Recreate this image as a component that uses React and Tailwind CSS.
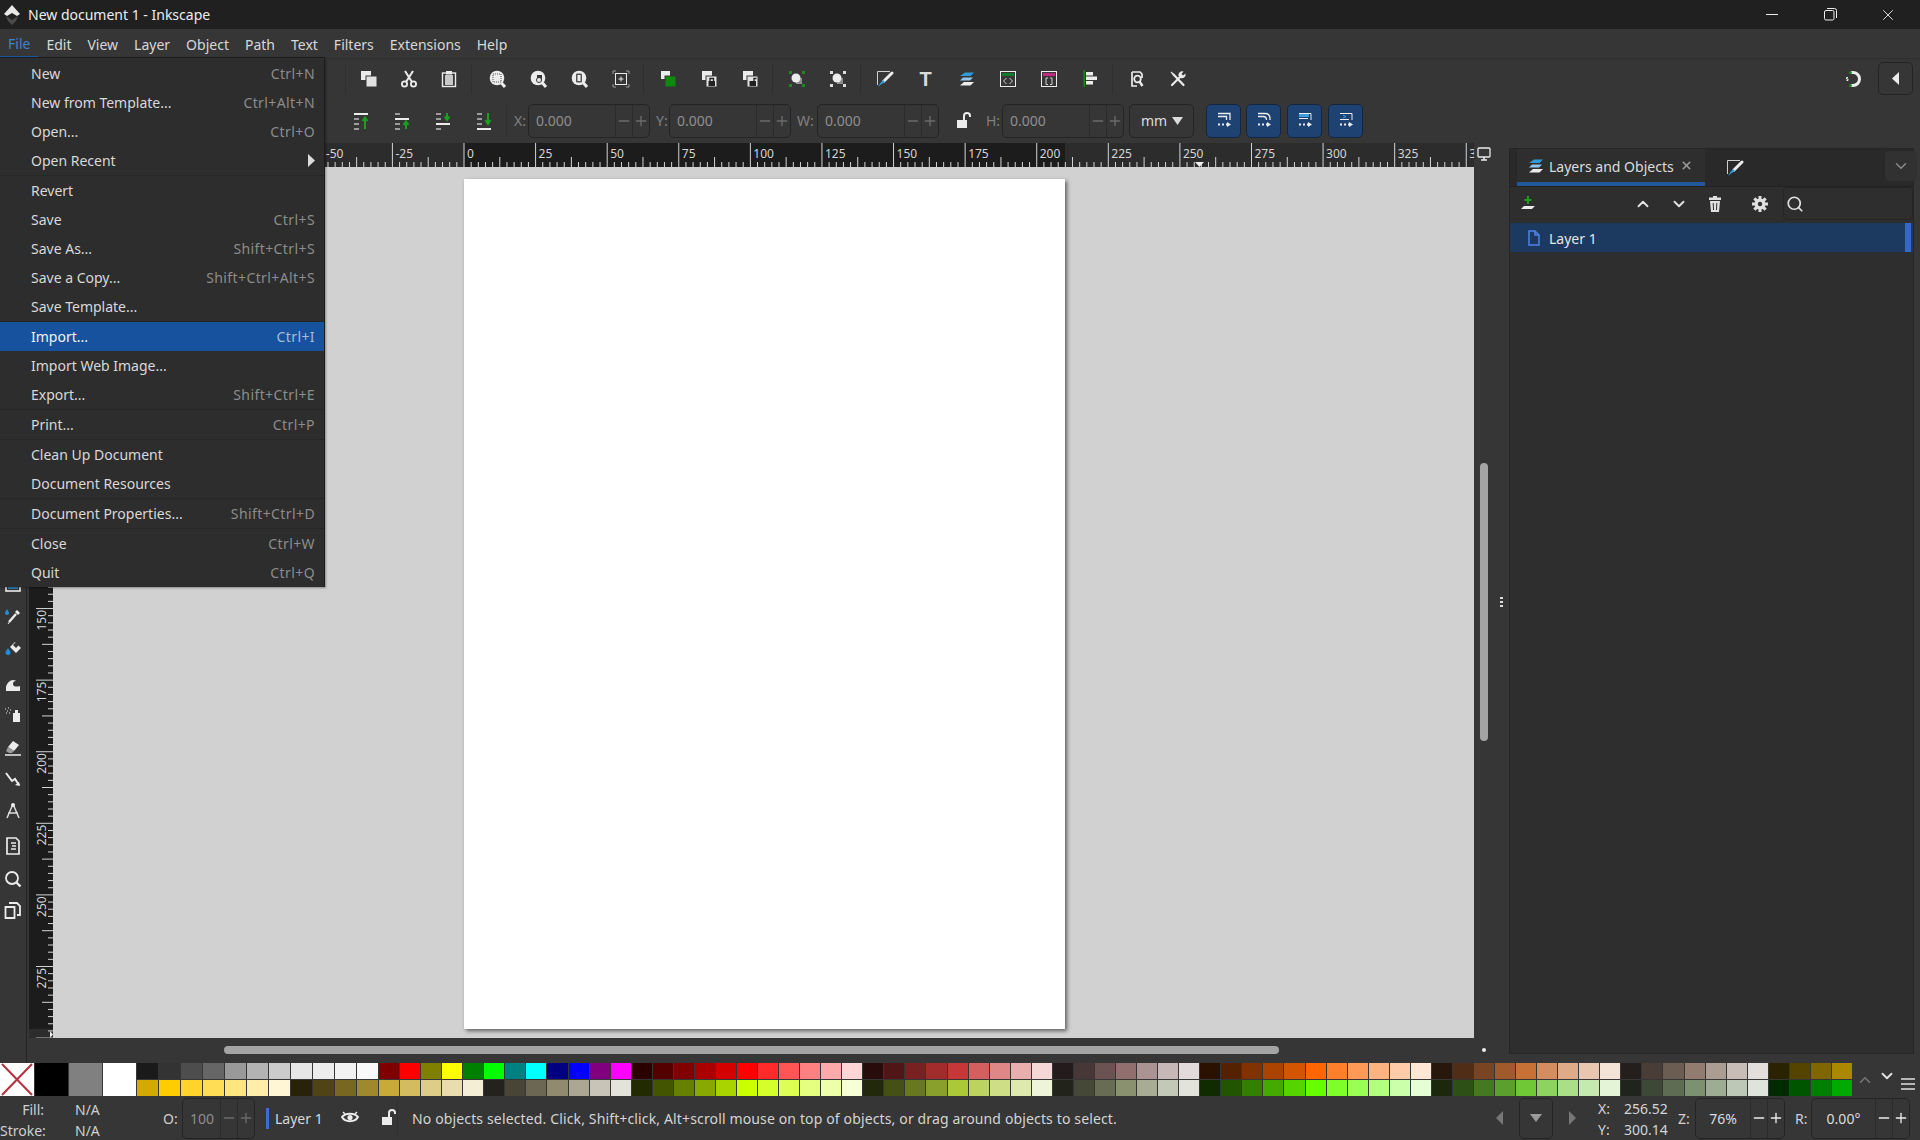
import { ChevronDown, ChevronUp, Minus, Plus, Search, X } from "lucide-react";

const menuItems = [
  ["New", "Ctrl+N"],
  ["New from Template...", "Ctrl+Alt+N"],
  ["Open...", "Ctrl+O"],
  ["Open Recent", "", "arrow", "sep"],
  ["Revert", ""],
  ["Save", "Ctrl+S"],
  ["Save As...", "Shift+Ctrl+S"],
  ["Save a Copy...", "Shift+Ctrl+Alt+S"],
  ["Save Template...", "", "", "sep"],
  ["Import...", "Ctrl+I", "active"],
  ["Import Web Image...", ""],
  ["Export...", "Shift+Ctrl+E", "", "sep"],
  ["Print...", "Ctrl+P", "", "sep"],
  ["Clean Up Document", ""],
  ["Document Resources", "", "", "sep"],
  ["Document Properties...", "Shift+Ctrl+D", "", "sep"],
  ["Close", "Ctrl+W"],
  ["Quit", "Ctrl+Q"],
];

const topColors = "#1a1a1a #333333 #4d4d4d #666666 #999999 #b3b3b3 #cccccc #e6e6e6 #ececec #f2f2f2 #f9f9f9 #800000 #ff0000 #808000 #ffff00 #008000 #00ff00 #008080 #00ffff #000080 #0000ff #800080 #ff00ff #2b0000 #550000 #800000 #aa0000 #d40000 #ff0000 #ff2a2a #ff5555 #ff8080 #ffaaaa #ffd5d5 #280b0b #501616 #782121 #a02c2c #c83737 #d35f5f #de8787 #e9afaf #f4d7d7 #241c1c #483737 #6c5353 #916f6f #ac9393 #c8b7b7 #e3dbdb #2b1100 #552200 #803300 #aa4400 #d45500 #ff6600 #ff7f2a #ff9955 #ffb380 #ffccaa #ffe6d5 #28170b #502d16 #784421 #a05a2c #c87137 #d38d5f #deaa87 #e9c6af #f4e3d7 #241f1c #483e37 #6c5d53 #917c6f #ac9d93 #c8beb7 #e3dedb #2b2200 #554400 #806600 #aa8800".split(" ");
const bottomColors = "#d4aa00 #ffcc00 #ffd42a #ffdd55 #ffe680 #ffeeaa #fff6d5 #28220b #504416 #786721 #a0892c #c8ab37 #d3bc5f #decd87 #e9ddaf #f4eed7 #24221c #484537 #6c6753 #918a6f #aca793 #c8c4b7 #e3e2db #222b00 #445500 #668000 #88aa00 #aad400 #ccff00 #d4ff2a #ddff55 #e5ff80 #eeffaa #f6ffd5 #22280b #445016 #677821 #89a02c #abc837 #bcd35f #cdde87 #dde9af #eef4d7 #22241c #454837 #676c53 #8a916f #a7ac93 #c4c8b7 #e2e3db #112b00 #225500 #338000 #44aa00 #55d400 #66ff00 #7fff2a #99ff55 #b3ff80 #ccffaa #e5ffd5 #1c280b #2d5016 #447821 #5aa02c #71c837 #8dd35f #aade87 #c6e9af #e3f4d7 #1f241c #3e4837 #5d6c53 #7c916f #9dac93 #bec8b7 #dee3db #002b00 #005500 #008000 #00aa00".split(" ");

const G = ({ s = 18, children }) => (
  <svg width={s} height={s} viewBox="0 0 18 18" fill="none">
    {children}
  </svg>
);

const W = "#ececec";
const BG = "#363636";

const Cell = ({ children, w = "w-[41px]" }) => <div className={`${w} flex shrink-0 items-center justify-center`}>{children}</div>;
const Sep = ({ cls = "mr-[2px]" }) => <div className={`ml-[2px] h-[30px] w-px shrink-0 bg-[#2f2f2f] ${cls}`} />;

const Duplicate = () => (
  <G>
    <rect x="1" y="1" width="10" height="9" fill={W} />
    <rect x="6" y="6" width="11" height="11" fill="#e2e2e2" stroke={BG} />
  </G>
);
const Cut = () => (
  <G>
    <path d="M5 1l7 11M13 1L6 12" stroke={W} strokeWidth="2" />
    <circle cx="4.5" cy="14" r="2.6" stroke={W} strokeWidth="1.8" />
    <circle cx="13.5" cy="14" r="2.6" stroke={W} strokeWidth="1.8" />
  </G>
);
const Paste = () => (
  <G>
    <rect x="2.5" y="3" width="13" height="13.5" stroke={W} strokeWidth="1.4" />
    <rect x="5" y="5" width="8" height="10" fill="#c8c8c8" />
    <rect x="6" y="1" width="6" height="3.5" fill={W} />
  </G>
);
const Mag = ({ children }) => (
  <G>
    <circle cx="8" cy="8" r="7.3" fill={W} />
    <path d="M12.5 13l3.5 4" stroke={W} strokeWidth="3" />
    {children}
  </G>
);
const ZoomCenter = () => (
  <G>
    <path d="M1 4V1h3M14 1h3v3M1 14v3h3M17 14v3h-3" stroke="#9a9a9a" />
    <rect x="3.5" y="3.5" width="11" height="11" stroke={W} />
    <path d="M9 6.5v5M6.5 9h5" stroke={W} />
  </G>
);
const Stack = ({ front = "#e2e2e2", lock, open }) => (
  <G>
    <rect x="2" y="1" width="10" height="9" fill={W} />
    <rect x="6" y="6" width="11" height="11" fill={front} stroke={BG} />
    {lock && (
      <>
        <rect x="8.5" y="11" width="6.5" height="5" fill="#222" />
        <path d={open ? "M13 11V8.5h2.5" : "M10 11V8.5h3.5V11"} stroke="#222" strokeWidth="1.3" />
      </>
    )}
  </G>
);
const Handles = ({ c }) => (
  <G>
    <rect x="1" y="1" width="3" height="3" fill={c} />
    <rect x="14" y="1" width="3" height="3" fill={c} />
    <rect x="1" y="14" width="3" height="3" fill={c} />
    <rect x="14" y="14" width="3" height="3" fill={c} />
    <rect x="8" y="8" width="6" height="6" fill="#8d8d8d" />
    <circle cx="8" cy="8" r="4.5" fill={W} />
  </G>
);
const FillStroke = () => (
  <G>
    <path d="M14 1.500H1.500V15" stroke="#d0d0d0" strokeWidth="1" />
    <path d="M16 3l-8.500 8.500" stroke={W} strokeWidth="3" strokeLinecap="round" />
    <path d="M7 10l2 2-4 2.500-3 2.500 2-3.500z" fill="#2f9bd8" />
  </G>
);
const Layers = ({ s = 18 }) => (
  <G s={s}>
    <path d="M7 2.500h9l-3.500 3.500H2z" fill="#2f9bd8" />
    <path d="M5 7.500h10l-3 3H2z" fill="#8fc5ea" />
    <path d="M6 12h10l-3.500 3.500H2z" fill={W} />
  </G>
);
const DocHead = ({ c, glyph }) => (
  <G>
    <rect x="1.500" y="1.500" width="15" height="15" stroke={W} />
    <rect x="3" y="3" width="12" height="3" fill={c} />
    {glyph === "xml" && <path d="M7.500 8l-3 3 3 3M10.500 8l3 3-3 3" stroke="#d0d0d0" />}
    {glyph === "css" && <path d="M8 8H6v6.500h2M10 8h2v6.500h-2" stroke="#d0d0d0" />}
  </G>
);
const Align = () => (
  <G>
    <rect x="2.500" y="0" width="1.500" height="17" fill="#138a13" />
    <rect x="5" y="2" width="7" height="3.500" fill={W} />
    <rect x="5" y="6.500" width="11" height="3.500" fill={W} />
    <rect x="5" y="11" width="7" height="3.500" fill={W} />
  </G>
);
const DocProps = () => (
  <G>
    <path d="M4 2h8l2 2v4M4 2v14h5" stroke={W} strokeWidth="1.700" />
    <circle cx="9.500" cy="9" r="3.300" stroke={W} strokeWidth="1.800" />
    <path d="M11.500 11.500l3 4.500" stroke={W} strokeWidth="2.400" />
  </G>
);
const Prefs = () => (
  <G>
    <path d="M2 2l2.500 2.500" stroke={W} strokeWidth="1.300" />
    <path d="M4.500 4.500L14.500 15" stroke={W} strokeWidth="2.200" strokeLinecap="round" />
    <path d="M3 15L11 7" stroke={W} strokeWidth="2.200" strokeLinecap="round" />
    <path d="M14.500 1.500l-2 2.500 1.500 1.500 2.500-2a3.800 3.800 0 0 1-5 4.500l-2-2a3.800 3.800 0 0 1 5-4.500z" fill={W} />
  </G>
);
const AlignV = ({ top, arrow }) => (
  <G>
    {[0, 1, 2, 3].map((i) => (
      <rect key={i} x="2" y={1 + i * 5} width={i === top ? 14 : 5} height="2" fill={i === top ? W : "#9c9c9c"} />
    ))}
    <path d={arrow} stroke="#1aa01a" strokeWidth="2" />
  </G>
);
const Snap = ({ kind }) => (
  <G>
    {kind === 0 && <path d="M3 1.500h12V8M3 4.500h8.500V8" stroke={W} strokeWidth="1.300" />}
    {kind === 1 && <path d="M3 1.500h7q5 0 5 5V8M3 4.500h5q3.500 0 3.500 3.500" stroke={W} strokeWidth="1.300" />}
    {kind === 2 && (
      <>
        <path d="M3 2h10v3H3z" fill="#3f9ee0" />
        <path d="M3 1.500h12V8" stroke={W} />
        <path d="M3 6.500h9" stroke={W} />
      </>
    )}
    {kind === 3 && (
      <>
        <path d="M3 1.500h12V8" stroke={W} />
        <path d="M6 3l3 1.500L6 6" stroke="#3f9ee0" />
        <path d="M3 7.500h9" stroke={W} />
      </>
    )}
    <path d="M3 12.500h2M7 12.500h2M11 12.500h2" stroke={W} strokeWidth="2" />
    <path d="M12 10l4 2.500-4 2.500z" fill={W} />
  </G>
);
const Lock = ({ open }) => (
  <svg width="18" height="18" viewBox="0 0 18 18" fill="none">
    <rect x="3" y="8" width="10" height="8" fill={W} />
    <path d={open ? "M10 8V4a3 3 0 0 1 6 0v1" : "M5 8V5a3 3 0 0 1 6 0v3"} stroke={W} strokeWidth="2" />
  </svg>
);
const Gear = () => (
  <svg width="18" height="18" viewBox="0 0 18 18" fill="none">
    {[0, 45, 90, 135].map((r) => (
      <rect key={r} x="7.500" y="1" width="3" height="16" fill="#e0e0e0" transform={`rotate(${r} 9 9)`} />
    ))}
    <circle cx="9" cy="9" r="5.500" fill="#e0e0e0" />
    <circle cx="9" cy="9" r="2.200" fill="#2e2e2e" />
  </svg>
);
const Trash = () => (
  <svg width="16" height="18" viewBox="0 0 16 18" fill="none">
    <path d="M6 1h4v1.500H6zM2 2.500h12V5H2z" fill="#e0e0e0" />
    <path d="M3 6h10l-1 11H4z" fill="#e0e0e0" />
    <path d="M6.200 8l.3 7M9.800 8l-.3 7" stroke="#2e2e2e" />
  </svg>
);

const Spin = ({ w, value, dim = true, center, h = "h-[34px]", cell = "w-[17px]" }) => (
  <div className={`${w} ${h} flex shrink-0 rounded-[5px] border border-[#242424]`}>
    <div className={`flex flex-1 items-center ${center ? "justify-center" : "pl-[7px]"} ${dim ? "text-[#8e8e8e]" : "text-[#dcdcdc]"}`}>{value}</div>
    <div className={`${cell} flex items-center justify-center border-l border-[#2b2b2b]`}>
      <Minus size={16} strokeWidth={2} className={dim ? "text-[#6b6b6b]" : "text-[#ececec]"} />
    </div>
    <div className={`${cell} flex items-center justify-center border-l border-[#2b2b2b]`}>
      <Plus size={16} strokeWidth={2} className={dim ? "text-[#6b6b6b]" : "text-[#ececec]"} />
    </div>
  </div>
);

const BlueBtn = ({ kind, cls }) => (
  <div className={`flex h-[34px] w-[35px] shrink-0 items-center justify-center rounded-[5px] border border-[#14263f] bg-[#1e4272] ${cls}`}>
    <Snap kind={kind} />
  </div>
);

const PX = 2.8636;

const HRuler = () => {
  const ox = 435; // page origin inside the ruler
  const ticks = [];
  // everything left of -50 sits under the open menu
  for (let i = -20; i <= 140; i++) {
    const x = ox + i * 2.5 * PX;
    const v = i * 2.5;
    const major = i % 10 === 0;
    const mid = i % 5 === 0;
    const h = major ? 24 : mid ? 10 : 5;
    ticks.push(<line key={i} x1={x} x2={x} y1={24 - h} y2={24} stroke="#d4d4d4" strokeWidth="1" />);
    if (major) {
      ticks.push(
        <text key={`t${i}`} x={x + (v === -50 ? 5 : 3)} y={15} fill="#d4d4d4" fontSize="12" fontFamily="Noto Sans, sans-serif">
          {v === 350 ? "3" : v}
        </text>
      );
    }
  }
  return (
    <svg width="1445" height="24" className="block shrink-0">
      <rect width="1445" height="24" fill="#2c2c2c" />
      <rect x={ox} width="601" height="24" fill="#1c1c1c" />
      {ticks}
      <path d="M1166 19h9l-4.500 5z" fill="#eee" />
    </svg>
  );
};

const VRuler = () => {
  const oy = 12; // page origin inside the ruler
  const ticks = [];
  for (let i = 50; i <= 120; i++) {
    const y = oy + i * 2.5 * PX;
    const major = i % 10 === 0;
    const mid = i % 5 === 0;
    const w = major ? 17 : mid ? 11 : 5;
    ticks.push(<line key={i} x1={24 - w} x2={24} y1={y} y2={y} stroke="#d4d4d4" strokeWidth="1" />);
    if (major && i >= 60 && i < 120) {
      ticks.push(
        <text key={`t${i}`} transform={`translate(17 ${y + 22}) rotate(-90)`} fill="#d4d4d4" fontSize="12" fontFamily="Noto Sans, sans-serif">
          {i * 2.5}
        </text>
      );
    }
  }
  return (
    <svg width="24" height="871" className="block shrink-0">
      <rect width="24" height="871" fill="#1c1c1c" />
      <rect y="862" width="24" height="9" fill="#2c2c2c" />
      {ticks}
      <path d="M21 864v7l3-3.500z" fill="#eee" />
    </svg>
  );
};

const LeftTools = () => {
  const tools = [
    <G key="a"><rect x="2" y="1" width="14" height="12" stroke={W} strokeWidth="1.6" /><rect x="4" y="3" width="10" height="8" fill="#2f7fb8" /></G>,
    <G key="b"><path d="M3 1c-1 2-2 3-2 4a2 2 0 0 0 4 0c0-1-1-2-2-4z" fill="#1b8fe0" /><path d="M5 14l7-8" stroke={W} strokeWidth="2.400" /><path d="M11 4l2-2 3 3-2 2z" fill={W} /><path d="M4 16l1.500-2" stroke={W} /></G>,
    <G key="c"><path d="M6 8l5-5 6 6-5 5z" fill={W} /><path d="M9 6l3-3 3 3-3 3z" fill="#363636" /><path d="M4 9c-1 2-2.500 3-2.500 4.500a2.500 2.500 0 0 0 5 0C6.500 12 5 11 4 9z" fill="#1b8fe0" /></G>,
    <G key="d"><path d="M2 16v-4c1-4 4-7 7-7 2 0 3 1 3 1-2 0-3 1-3 3 0 3 4 3 7 2v5z" fill={W} /></G>,
    <G key="e"><rect x="9" y="7" width="7" height="9" fill={W} /><rect x="11" y="4" width="3" height="3" fill={W} /><path d="M1 3h1M4 2h1M3 5h1M6 4h1M2 7h1M5 7h1" stroke="#aaa" strokeWidth="1.500" /></G>,
    <G key="f"><path d="M9 3l6 4-5 6-6-4z" fill={W} /><path d="M4 9l6 4-2 2H5l-3-2z" fill="#9a9a9a" /><path d="M1 17h16" stroke={W} strokeWidth="1.500" /></G>,
    <G key="g"><path d="M2 3l6 8 3-2 4 6" stroke={W} strokeWidth="2" /><path d="M16 16l-5-1 4-3z" fill={W} /></G>,
    <G key="h"><path d="M9 2L3 16M9 2l6 14M4 11h10" stroke="#dcdcdc" strokeWidth="1.500" /><circle cx="9" cy="3" r="2" fill={W} /></G>,
    <G key="i"><path d="M3 1h9l3 3v13H3z" stroke={W} strokeWidth="1.700" /><path d="M7 6h5M8 9h4M7 12h5" stroke={W} strokeWidth="1.500" /></G>,
    <G key="j"><circle cx="8" cy="8" r="6" stroke={W} strokeWidth="1.800" /><path d="M12.500 12.500l4 4" stroke={W} strokeWidth="2.400" /></G>,
    <G key="k"><path d="M1.500 6h9v11h-9z" stroke={W} strokeWidth="1.800" /><path d="M5 2h8l3 3v9h-3" stroke={W} strokeWidth="1.800" /></G>,
  ];
  const gaps = ["mt-[435px]", "mt-[12px]", "mt-[13px]", "mt-[18px]", "mt-[13px]", "mt-[14px]", "mt-[14px]", "mt-[14px]", "mt-[17px]", "mt-[15px]", "mt-[13px]"];
  return (
    <div className="flex w-[27px] shrink-0 flex-col items-center border-r border-[#242424] pr-[1px]">
      {tools.map((t, i) => (
        <div key={i} className={`${gaps[i]} h-[18px] shrink-0`}>
          {t}
        </div>
      ))}
    </div>
  );
};

export default function App() {
  return (
    <div className="relative flex h-[1140px] w-[1920px] flex-col overflow-hidden bg-[#363636] font-['Noto_Sans',sans-serif] text-[14px] text-[#dedede]">
      {/* title bar */}
      <div className="flex h-[29px] shrink-0 items-center bg-[#202020] pl-[3px] pr-[3px]">
        <svg width="18" height="20" viewBox="0 0 18 20">
          <path d="M9 0L1 9l3 2 5-3 5 3 3-2z" fill="#e8e8e8" />
          <path d="M3 11l6 4 6-4-2 5-4 4-4-4z" fill="#4b4b4b" />
        </svg>
        <span className="ml-[7px] text-[#ececec]">New document 1 - Inkscape</span>
        <div className="ml-auto flex">
          <Cell w="w-[58px]"><div className="h-px w-[12px] bg-[#ececec]" /></Cell>
          <Cell w="w-[58px]">
            <svg width="13" height="13" viewBox="0 0 13 13" fill="none" stroke="#ececec">
              <rect x="0.500" y="2.500" width="9.500" height="9.500" rx="1.500" />
              <path d="M3 .500h7.500a2 2 0 0 1 2 2V10" />
            </svg>
          </Cell>
          <Cell w="w-[58px]"><X size={18} strokeWidth={1.200} className="text-[#ececec]" /></Cell>
        </div>
      </div>

      {/* menu bar */}
      <div className="flex h-[29px] shrink-0 items-center">
        <span className="flex h-full items-center border-b-2 border-[#1f5aa6] px-[8px] pt-[2px] text-[#3f83cf]">File</span>
        {["Edit", "View", "Layer", "Object", "Path", "Text", "Filters", "Extensions", "Help"].map((m) => (
          <span key={m} className="px-[8px] pt-[2px] text-[#d8d8d8]">{m}</span>
        ))}
      </div>

      {/* commands bar */}
      <div className="flex h-[45px] shrink-0 items-center border-t border-[#2f2f2f] pb-[5px] pl-[343px]">
        <Sep />
        <Cell><Duplicate /></Cell>
        <Cell w="w-[40px]"><Cut /></Cell>
        <Cell w="w-[40px]"><Paste /></Cell>
        <Sep cls="mr-[5px]" />
        <Cell><Mag><rect x="4" y="4" width="8" height="8" fill="none" stroke="#555" strokeDasharray="1 1" /></Mag></Cell>
        <Cell><Mag><path d="M7 5h5v6H7z" fill="#363636" /><circle cx="9" cy="10" r="2.500" fill={W} stroke="#363636" /></Mag></Cell>
        <Cell><Mag><rect x="5" y="3.500" width="6" height="9" rx="1" fill="#555" stroke="none" /><rect x="6.500" y="5" width="3" height="6" fill={W} /></Mag></Cell>
        <Cell><ZoomCenter /></Cell>
        <Sep cls="mr-[3px]" />
        <Cell><G><rect x="2" y="1" width="9" height="8" fill={W} /><rect x="6" y="6" width="11" height="11" fill="#0d8a0d" stroke={BG} /></G></Cell>
        <Cell><Stack lock /></Cell>
        <Cell><Stack lock open /></Cell>
        <Sep cls="mr-[3px]" />
        <Cell><Handles c="#1d8a1d" /></Cell>
        <Cell><Handles c="#dcdcdc" /></Cell>
        <Sep cls="mr-[3px]" />
        <Cell><FillStroke /></Cell>
        <Cell><span className="font-['Liberation_Sans',sans-serif] text-[20px] font-bold leading-none text-[#dcdcdc]">T</span></Cell>
        <Cell><Layers /></Cell>
        <Cell><DocHead c="#0e7a2a" glyph="xml" /></Cell>
        <Cell><DocHead c="#c02a80" glyph="css" /></Cell>
        <Cell><Align /></Cell>
        <Sep cls="mr-[3px]" />
        <Cell><DocProps /></Cell>
        <Cell><Prefs /></Cell>
        <div className="ml-auto mr-[7px] flex items-center gap-[16px]">
          <svg width="20" height="18" viewBox="0 0 20 18" fill="none">
            <path d="M9 2.500h2a6.500 6.500 0 0 1 0 13H9" stroke={W} strokeWidth="3" />
            <rect x="7" y="1" width="3" height="3" rx="1.500" fill="#1d8a1d" />
            <rect x="7" y="14" width="3" height="3" rx="1.500" fill="#1d8a1d" />
            <path d="M6 7.500H4.500v1.500H6v1.500H4.500" stroke={W} />
          </svg>
          <div className="flex h-[33px] w-[35px] items-center justify-center rounded-[5px] border border-[#242424]">
            <svg width="8" height="13" viewBox="0 0 8 13"><path d="M7 0v13L0 6.500z" fill={W} /></svg>
          </div>
        </div>
      </div>

      {/* selector bar */}
      <div className="flex h-[40px] shrink-0 items-center pb-[5px] pl-[340px]">
        <Cell><AlignV top={0} arrow="M13 17V6M10.500 9L13 5.500 15.500 9" /></Cell>
        <Cell><AlignV top={1} arrow="M13 17V10M10.500 13L13 9.500 15.500 13" /></Cell>
        <Cell><AlignV top={2} arrow="M13 1v6M10.500 4.500L13 8l2.500-3.500" /></Cell>
        <Cell><AlignV top={3} arrow="M13 1v10M10.500 8L13 12l2.500-4" /></Cell>
        <Sep />
        <span className="ml-[5px] w-[14px] text-[#808080]">X:</span>
        <Spin w="w-[122px]" value="0.000" />
        <span className="ml-[6px] w-[13px] text-[#808080]">Y:</span>
        <Spin w="w-[122px]" value="0.000" />
        <span className="ml-[6px] w-[20px] text-[#808080]">W:</span>
        <Spin w="w-[122px]" value="0.000" />
        <Cell w="w-[47px]"><Lock open /></Cell>
        <span className="w-[16px] text-[#808080]">H:</span>
        <Spin w="w-[122px]" value="0.000" />
        <div className="ml-[5px] flex h-[34px] w-[65px] shrink-0 items-center gap-[5px] rounded-[5px] border border-[#242424] pl-[11px] text-[#dcdcdc]">
          mm
          <svg width="11" height="8" viewBox="0 0 11 8"><path d="M0 0h11L5.500 8z" fill="#dcdcdc" /></svg>
        </div>
        <BlueBtn kind={0} cls="ml-[12px]" />
        <BlueBtn kind={1} cls="ml-[5px]" />
        <BlueBtn kind={2} cls="ml-[6px]" />
        <BlueBtn kind={3} cls="ml-[6px]" />
      </div>

      {/* work area */}
      <div className="flex h-[920px] shrink-0">
        <LeftTools />
        <div className="w-[2px] shrink-0" />
        <div className="flex w-[1445px] shrink-0 flex-col">
          <HRuler />
          <div className="flex">
            <VRuler />
            <div className="h-[871px] flex-1 bg-[#d1d1d1] pl-[411px] pt-[12px]">
              <div className="h-[850px] w-[601px] bg-white shadow-[2px_2px_4px_rgba(0,0,0,0.55)]" />
            </div>
          </div>
          <div className="ml-[195px] mt-[8px] h-[8px] w-[1055px] rounded-full bg-[#a4a4a4]" />
        </div>
        <div className="flex w-[20px] shrink-0 flex-col items-center pt-[4px]">
          <svg width="16" height="16" viewBox="0 0 16 16" fill="none">
            <rect x="2" y="1" width="12" height="9" rx="1" stroke={W} strokeWidth="1.300" />
            <path d="M5 13h6M8 10v3" stroke={W} strokeWidth="1.500" />
          </svg>
          <div className="mt-[300px] h-[278px] w-[8px] rounded-full bg-[#a4a4a4]" />
          <div className="mb-[11px] mt-auto h-[4px] w-[4px] rounded-full bg-[#ececec]" />
        </div>
        <div className="flex w-[15px] shrink-0 flex-col items-center gap-[2px] pt-[454px]">
          <div className="h-[2px] w-[3px] bg-[#dcdcdc]" />
          <div className="h-[2px] w-[3px] bg-[#dcdcdc]" />
          <div className="h-[2px] w-[3px] bg-[#dcdcdc]" />
        </div>

        {/* layers dock */}
        <div className="mb-[9px] mt-[5px] flex w-[405px] shrink-0 flex-col border border-[#262626] bg-[#2e2e2e]">
          <div className="flex h-[37px] shrink-0 items-stretch bg-[#292929] pl-[7px]">
            <div className="flex w-[188px] items-center border-b-[4px] border-[#22579a] bg-[#2e2e2e] pl-[10px]">
              <Layers />
              <span className="ml-[4px] pt-[1px] text-[#dcdcdc]">Layers and Objects</span>
              <X size={13} strokeWidth={3} className="ml-[6px] text-[#9a9a9a]" />
            </div>
            <div className="ml-[21px] flex items-center">
              <FillStroke />
            </div>
            <div className="ml-auto mr-[-4px] mt-[2px] flex h-[30px] w-[32px] items-center justify-center rounded-[4px] bg-[#313131]">
              <ChevronDown size={18} className="text-[#8a8a8a]" />
            </div>
          </div>
          <div className="flex h-[37px] shrink-0 items-center border-t border-[#222] pb-[3px] pl-[10px]">
            <G>
              <path d="M8 1v8M4.500 5h7" stroke="#1aa01a" strokeWidth="2" />
              <path d="M4 11h11l-3 3H1z" fill={W} />
            </G>
            <div className="ml-[87px] flex w-[36px] justify-center"><ChevronUp size={18} strokeWidth={2.500} className="text-[#e0e0e0]" /></div>
            <div className="flex w-[36px] justify-center"><ChevronDown size={18} strokeWidth={2.500} className="text-[#e0e0e0]" /></div>
            <div className="flex w-[36px] justify-center"><Trash /></div>
            <div className="ml-[9px] flex w-[36px] justify-center"><Gear /></div>
            <div className="ml-[6px] flex h-[33px] w-[130px] items-center rounded-[4px] border border-[#252525] pl-[2px]">
              <Search size={18} strokeWidth={2.300} className="text-[#e0e0e0]" />
            </div>
          </div>
          <div className="flex h-[29px] shrink-0 items-center bg-[#1c3a60] pl-[18px]">
            <svg width="12" height="16" viewBox="0 0 12 16" fill="none" stroke="#4d82e6" strokeWidth="1.500">
              <path d="M1 1h6l4 4v10H1zM7 1v4h4" />
            </svg>
            <span className="ml-[9px] pt-[1px] text-[#e4e4e4]">Layer 1</span>
            <div className="ml-auto mr-[2px] h-full w-[6px] bg-[#3568c8]" />
          </div>
        </div>
      </div>

      {/* palette */}
      <div className="flex h-[33px] shrink-0">
        <div className="w-[34px] shrink-0 bg-white">
          <svg width="34" height="33" viewBox="0 0 34 33"><path d="M2 1l30 31M32 1L2 32" stroke="#b5303f" strokeWidth="2" /></svg>
        </div>
        <div className="ml-px w-[33px] shrink-0 bg-black" />
        <div className="ml-px w-[33px] shrink-0 bg-[#808080]" />
        <div className="ml-px w-[33px] shrink-0 bg-white" />
        <div className="ml-px grid w-[1716px] shrink-0 grid-cols-[repeat(11,22px)_repeat(70,minmax(0,1fr))] grid-rows-2 gap-y-px">
          {topColors.map((c, i) => (
            <div key={`a${i}`} className="mr-px" style={{ backgroundColor: c }} />
          ))}
          {bottomColors.map((c, i) => (
            <div key={`b${i}`} className="mr-px" style={{ backgroundColor: c }} />
          ))}
        </div>
        <div className="ml-[3px] flex items-center gap-[4px] text-[#e0e0e0]">
          <ChevronUp size={18} strokeWidth={2} className="text-[#777]" />
          <ChevronDown size={18} strokeWidth={2.500} className="-translate-y-[4px]" />
          <svg width="14" height="12" viewBox="0 0 14 12" className="ml-[1px] translate-y-[4px]"><path d="M0 1h14M0 6h14M0 11h14" stroke="#e0e0e0" strokeWidth="1.600" /></svg>
        </div>
      </div>

      {/* status bar */}
      <div className="flex h-[44px] shrink-0 items-center">
        <div className="grid w-[106px] shrink-0 translate-y-[2px] grid-cols-[44px_auto] gap-x-[31px] leading-[21px] text-[#cfcfcf]">
          <span className="text-right">Fill:</span>
          <span>N/A</span>
          <span className="text-right">Stroke:</span>
          <span>N/A</span>
        </div>
        <span className="ml-[57px] w-[19px] shrink-0 text-[#cfcfcf]">O:</span>
        <Spin w="w-[73px]" value="100" h="h-[41px]" cell="w-[17px]" />
        <div className="ml-[11px] h-[21px] w-[3px] shrink-0 bg-[#3a6fd0]" />
        <span className="ml-[6px] w-[62px] shrink-0 text-[#d8d8d8]">Layer 1</span>
        <svg width="18" height="16" viewBox="0 0 18 16" fill="none" className="ml-[4px] shrink-0">
          <path d="M1 7c3-4.500 13-4.500 16 0-3 5.500-13 5.500-16 0z" stroke={W} strokeWidth="2" />
          <circle cx="9" cy="7.500" r="2.600" fill={W} />
          <path d="M2 2l2 2M16 2l-2 2" stroke={W} strokeWidth="1.500" />
        </svg>
        <div className="ml-[20px] shrink-0"><Lock open /></div>
        <div className="h-[34px] w-px shrink-0 bg-[#2f2f2f]" />
        <span className="ml-[14px] w-[1087px] shrink-0 whitespace-nowrap pt-[1px] tracking-[0.14px] text-[#d4d4d4]">No objects selected. Click, Shift+click, Alt+scroll mouse on top of objects, or drag around objects to select.</span>
        <svg width="8" height="14" viewBox="0 0 8 14" className="-ml-[3px] shrink-0"><path d="M7 0v14L0 7z" fill="#777" /></svg>
        <div className="ml-[15px] flex h-[41px] w-[34px] shrink-0 items-center justify-center rounded-[5px] border border-[#252525]">
          <svg width="12" height="8" viewBox="0 0 12 8"><path d="M0 0h12L6 8z" fill="#9a9a9a" /></svg>
        </div>
        <svg width="8" height="14" viewBox="0 0 8 14" className="ml-[15px] shrink-0"><path d="M1 0v14l7-7z" fill="#777" /></svg>
        <div className="ml-[22px] grid w-[76px] shrink-0 translate-y-[1px] grid-cols-[26px_auto] leading-[21px] text-[#d4d4d4]">
          <span>X:</span>
          <span>256.52</span>
          <span>Y:</span>
          <span>300.14</span>
        </div>
        <span className="ml-[4px] w-[17px] shrink-0 text-[#cfcfcf]">Z:</span>
        <Spin w="w-[90px]" value="76%" dim={false} center h="h-[41px]" />
        <span className="ml-[10px] w-[16px] shrink-0 text-[#cfcfcf]">R:</span>
        <Spin w="w-[99px]" value="0.00°" dim={false} center h="h-[41px]" />
      </div>

      {/* file menu, drops over the toolbars */}
      <div className="absolute left-0 top-[57px] h-[530px] w-[325px] border-r border-t border-[#1c1c1c] bg-[#2d2d2d] pt-[1px] shadow-[1px_1px_2px_rgba(0,0,0,0.35)]">
        {menuItems.map(([label, key, flag, sep]) => (
          <div key={label} className={`${sep ? "border-b border-[#262626]" : ""}`}>
            <div className={`flex h-[29px] items-center justify-between pl-[31px] pr-[9px] ${flag === "active" ? "bg-[#17529e] text-[#f2f2f2]" : "text-[#d8d8d8]"}`}>
              <span>{label}</span>
              {key && <span className={`tracking-[0.4px] ${flag === "active" ? "text-[#a9bcd6]" : "text-[#8c8c8c]"}`}>{key}</span>}
              {flag === "arrow" && (
                <svg width="7" height="13" viewBox="0 0 7 13"><path d="M0 0v13l7-6.500z" fill="#dcdcdc" /></svg>
              )}
            </div>
          </div>
        ))}
      </div>
    </div>
  );
}
